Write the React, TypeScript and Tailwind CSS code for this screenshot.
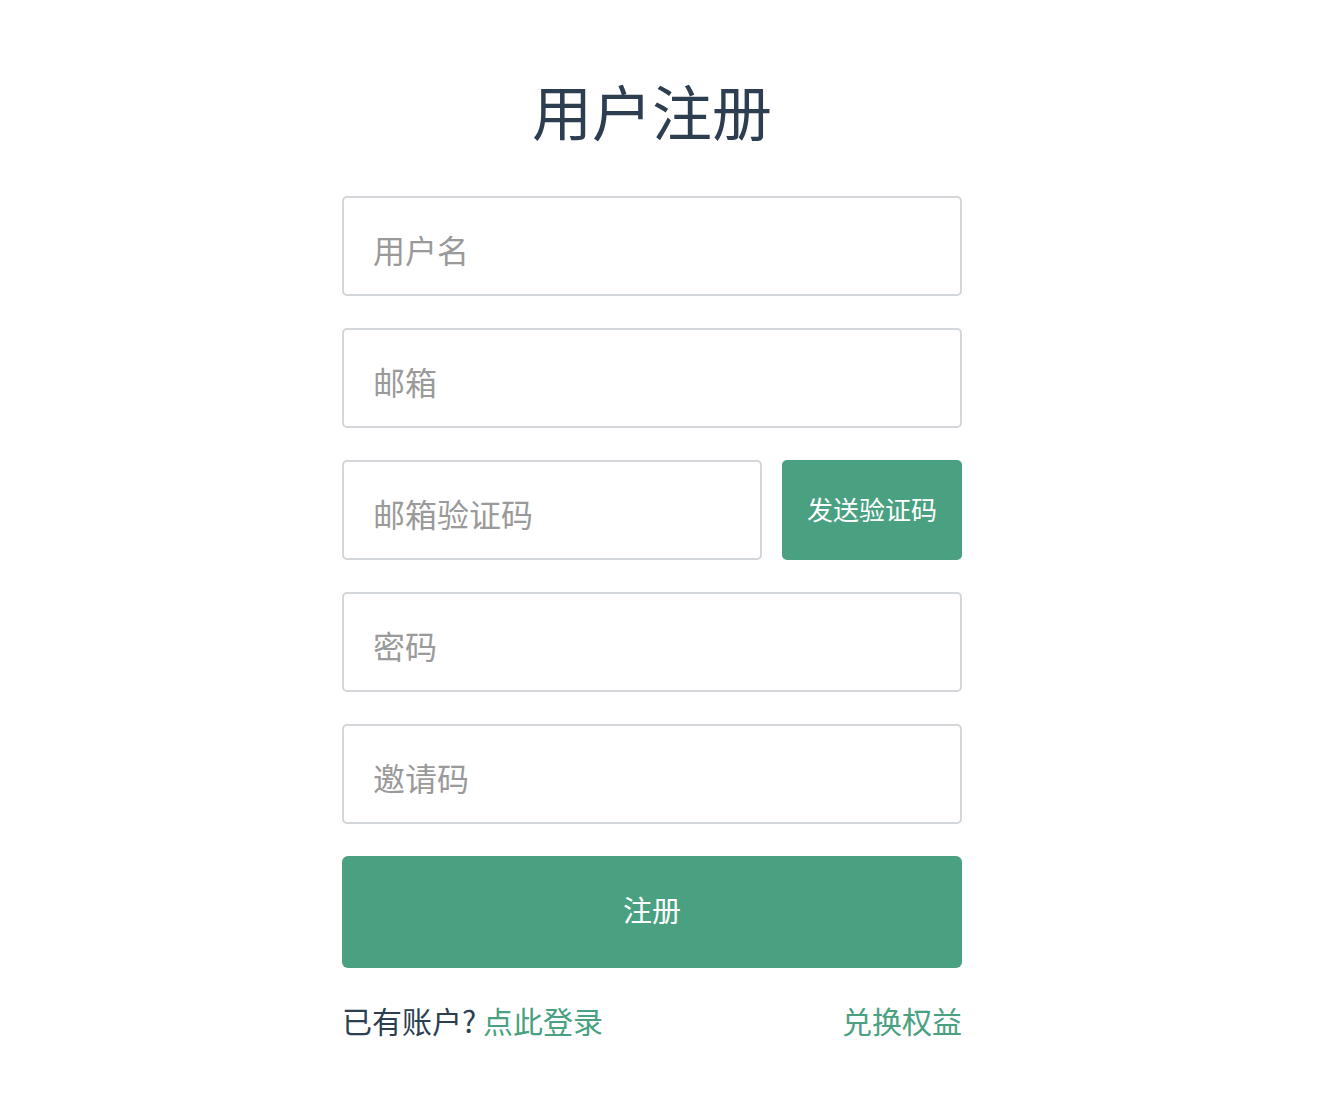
import React, { useState } from 'react';

const font = { fontFamily: '"Noto Sans CJK SC", "Noto Sans", sans-serif' };

const inputClass =
  'block w-full h-[100px] px-[29px] pt-[6px] bg-white border-2 border-[#d3d6da] rounded-[5px] text-[32px] text-[#2c3e50] placeholder:text-[#9a9a9a] focus:outline-none focus:border-[#4aa181]';

const App: React.FC = () => {
  const [username, setUsername] = useState('');
  const [email, setEmail] = useState('');
  const [code, setCode] = useState('');
  const [password, setPassword] = useState('');
  const [invite, setInvite] = useState('');

  return (
    <div className="min-h-screen bg-white pr-10" style={font}>
      <div className="w-[620px] mx-auto pt-[80px]">
        <h1 className="text-center text-[60px] leading-[60px] font-normal text-[#2c3e50] mb-[56px]">
          用户注册
        </h1>

        <form className="flex flex-col gap-8" onSubmit={(e) => e.preventDefault()}>
          <input
            type="text"
            placeholder="用户名"
            value={username}
            onChange={(e) => setUsername(e.target.value)}
            className={inputClass}
          />
          <input
            type="email"
            placeholder="邮箱"
            value={email}
            onChange={(e) => setEmail(e.target.value)}
            className={inputClass}
          />

          {/* 验证码 */}
          <div className="flex gap-5">
            <input
              type="text"
              placeholder="邮箱验证码"
              value={code}
              onChange={(e) => setCode(e.target.value)}
              className={inputClass + ' flex-1 min-w-0'}
            />
            <button
              type="button"
              className="w-[180px] h-[100px] shrink-0 pb-[4px] bg-[#4aa181] text-white text-[26px] rounded-[5px]"
            >
              发送验证码
            </button>
          </div>

          <input
            type="password"
            placeholder="密码"
            value={password}
            onChange={(e) => setPassword(e.target.value)}
            className={inputClass}
          />
          <input
            type="text"
            placeholder="邀请码"
            value={invite}
            onChange={(e) => setInvite(e.target.value)}
            className={inputClass}
          />

          <button
            type="submit"
            className="w-full h-[112px] pb-[4px] bg-[#4aa181] text-white text-[29px] rounded-[6px]"
          >
            注册
          </button>
        </form>

        <div className="flex items-center justify-between mt-[37px] text-[30px] leading-[30px]">
          <div className="text-[#2c3e50]">
            已有账户? <a href="#" className="text-[#4aa181]">点此登录</a>
          </div>
          <a href="#" className="text-[#4aa181]">兑换权益</a>
        </div>
      </div>
    </div>
  );
};

export default App;
